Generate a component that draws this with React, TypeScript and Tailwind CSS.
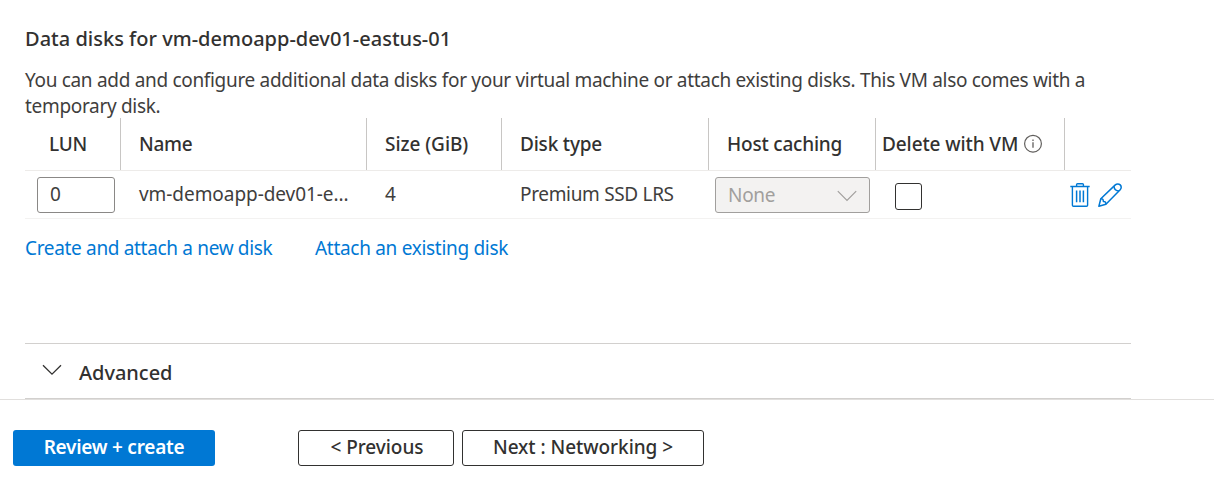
import React from "react";

const columns = "grid grid-cols-[96px_246px_135px_207px_167px_189px_66px]";
const headCell = "flex items-center border-r border-[#c8c6c4] pb-px";

function InfoIcon() {
  return (
    <svg className="ml-[5px] h-5 w-5 shrink-0" viewBox="0 0 20 20" fill="none" stroke="#605e5c">
      <circle cx="10" cy="9.7" r="8.4" strokeWidth="1.2" />
      <path d="M10 8.2v5.5M10 5.5v1.4" strokeWidth="1.3" />
    </svg>
  );
}

function TrashIcon() {
  return (
    <svg className="h-6 w-5" viewBox="0 0 20 24" fill="none" stroke="#0078d4" strokeWidth="1.4">
      <path d="M0.3 3.5h19.4M6.6 3V1.6q0-.9.9-.9h5q.9 0 .9.9V3M2.4 3.8v18.4q0 1.1 1.1 1.1h13q1.1 0 1.1-1.1V3.8" />
      <path d="M6.6 7.5v11.8M10 7.5v11.8M13.4 7.5v11.8" strokeWidth="1.5" />
    </svg>
  );
}

function PencilIcon() {
  return (
    <svg className="h-6 w-6" viewBox="0 0 24 24" fill="none" stroke="#0078d4" strokeWidth="1.5" strokeLinejoin="round">
      <path d="M0.9 23.2l1.9-7.4L17.3 1.9a3.45 3.45 0 0 1 4.9 4.9L7.9 21.2z" />
      <path d="M2.8 15.8q2.6-.2 2.5 2.6 2.8 0 2.6 2.8M16 3.2q.3 4.6 5 4.8" />
    </svg>
  );
}

export default function App() {
  return (
    <div className="flex h-[493px] w-[1214px] flex-col overflow-hidden bg-white font-['Noto_Sans','Open_Sans',sans-serif] text-[19px] leading-[26px] font-normal tracking-[-0.3px] whitespace-nowrap text-[#323130]">
      <main className="flex h-[399px] w-[1131px] flex-col pl-[25px]">
        <h1 className="mt-[26px] text-[20px] font-medium tracking-[0.01px]">Data disks for vm-demoapp-dev01-eastus-01</h1>
        <p className="mt-[15px] tracking-[-0.315px] text-[#3f3e3d]">
          You can add and configure additional data disks for your virtual machine or attach existing disks. This VM also comes with a
          <br />
          <span>temporary disk.</span>
        </p>
        <div className={`${columns} -mt-px h-[53px] border-b border-[#edebe9] font-medium`}>
          <div className={`${headCell} pl-6`}><span>LUN</span></div>
          <div className={`${headCell} pl-[18px]`}><span>Name</span></div>
          <div className={`${headCell} pl-[18px]`}><span className="tracking-[-0.05px]">Size (GiB)</span></div>
          <div className={`${headCell} pl-[18px]`}><span className="tracking-[-0.2px]">Disk type</span></div>
          <div className={`${headCell} pl-[18px]`}><span className="tracking-[-0.2px]">Host caching</span></div>
          <div className={`${headCell} pl-[6px]`}><span className="tracking-[-0.1px]">Delete with VM</span><InfoIcon /></div>
        </div>
        <div className={`${columns} h-[48px] items-center border-b border-[#f3f2f1] text-[#3f3e3d]`}>
          <div className="pl-3"><div className="flex h-9 w-[78px] items-center rounded-[3px] border border-[#8a8886] pb-[2px] pl-3">0</div></div>
          <div className="pb-[2px] pl-[18px]"><span className="tracking-[-0.06px]">vm-demoapp-dev01-e...</span></div>
          <div className="pb-[2px] pl-[18px]">4</div>
          <div className="pb-[2px] pl-[18px]"><span className="tracking-[-0.33px]">Premium SSD LRS</span></div>
          <div className="pl-[6px]">
            <div className="flex h-9 w-[155px] items-center justify-between rounded-[3px] border border-[#a19f9d] bg-[#f3f2f1] pr-3 pl-3 text-[#a19f9d]">
              <span>None</span>
              <svg className="mt-[2px] h-3 w-5" viewBox="0 0 20 12" fill="none" stroke="#a19f9d" strokeWidth="1.2"><path d="M.8 1.2l9.2 9.2 9.2-9.2" /></svg>
            </div>
          </div>
          <div className="pt-[3px] pl-[19px]"><div className="h-[27px] w-[27px] rounded-[3px] border border-[#323130]" /></div>
          <div className="flex gap-2 pl-[5px]"><TrashIcon /><PencilIcon /></div>
        </div>
        <div className="mt-4 flex text-[#0078d4]">
          <a className="w-[290px]"><span className="tracking-[-0.33px]">Create and attach a new disk</span></a>
          <a><span>Attach an existing disk</span></a>
        </div>
        <div className="mt-auto flex h-[56px] items-center border-y border-[#d2d0ce]">
          <svg className="mb-[2px] ml-[17px] h-3 w-5" viewBox="0 0 20 12" fill="none" stroke="#323130" strokeWidth="1.3"><path d="M1 1.2l9 9 9-9" /></svg>
          <span className="ml-[17px] pt-[4px] text-[20px] font-medium tracking-[-0.03px]">Advanced</span>
        </div>
      </main>
      <footer className="flex h-[94px] border-t border-[#e1dfdd] pt-[30px] pl-[13px]">
        <button className="h-9 w-[202px] rounded-[3px] bg-[#0078d4] pb-[3px] font-semibold tracking-[-0.25px] text-white"><span>Review + create</span></button>
        <button className="ml-[83px] h-9 w-[156px] rounded-[3px] border border-[#323130] pb-[3px] pl-[2px] font-medium tracking-[-0.05px]"><span>&lt; Previous</span></button>
        <button className="ml-2 h-9 w-[242px] rounded-[3px] border border-[#323130] pb-[3px] font-medium tracking-[-0.05px]"><span>Next : Networking &gt;</span></button>
      </footer>
    </div>
  );
}
